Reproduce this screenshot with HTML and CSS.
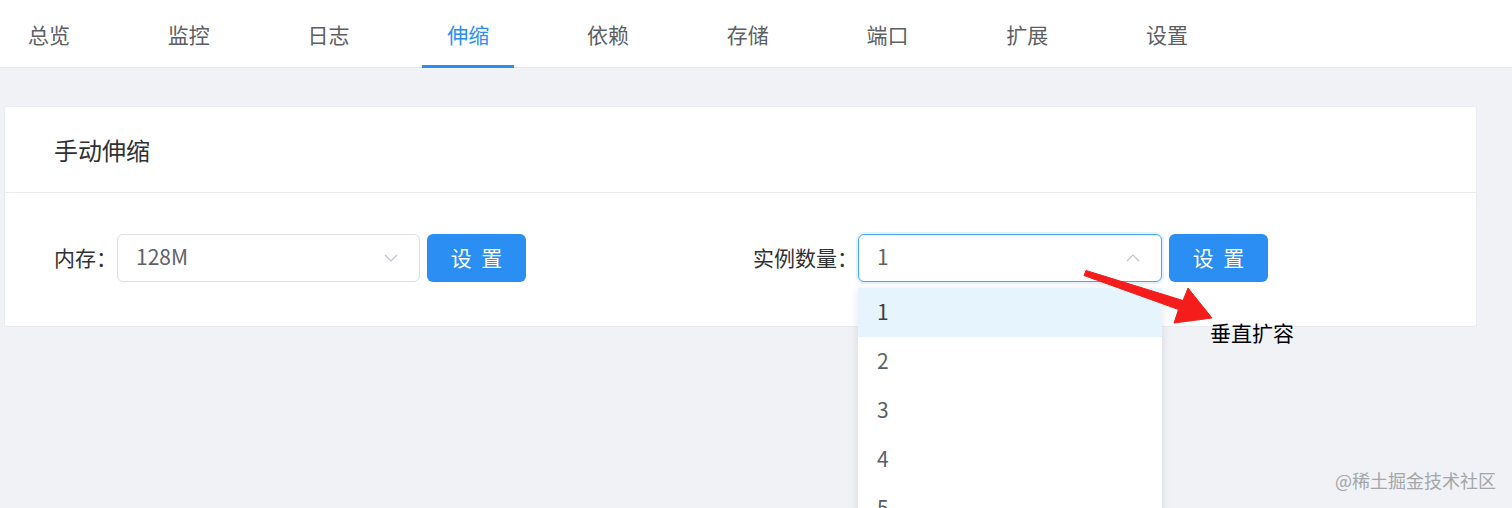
FILE: index.html
```html
<!DOCTYPE html>
<html lang="zh-CN">
<head>
<meta charset="utf-8">
<title>伸缩</title>
<link rel="stylesheet" href="styles.css">
</head>
<body>
<nav class="nav">
  <div class="tabs">
    <div class="tab">总览</div>
    <div class="tab">监控</div>
    <div class="tab">日志</div>
    <div class="tab active">伸缩</div>
    <div class="tab">依赖</div>
    <div class="tab">存储</div>
    <div class="tab">端口</div>
    <div class="tab">扩展</div>
    <div class="tab">设置</div>
  </div>
</nav>
<main class="main">
  <section class="card">
    <header class="card-header">手动伸缩</header>
    <div class="card-body">
      <div class="form-item">
        <span class="label">内存：</span>
        <div class="select">
          <span class="value">128M</span>
          <svg class="chev" width="14" height="8" viewBox="0 0 14 8"><polyline points="1,1 7,7 13,1" fill="none" stroke="#c0c4cc" stroke-width="1.2"/></svg>
        </div>
        <button class="btn">设 置</button>
      </div>
      <div class="form-item second">
        <span class="label">实例数量：</span>
        <div class="select-wrap">
          <div class="select focus">
            <span class="value">1</span>
            <svg class="chev" width="14" height="8" viewBox="0 0 14 8"><polyline points="1,7 7,1 13,7" fill="none" stroke="#c0c4cc" stroke-width="1.2"/></svg>
          </div>
          <ul class="dropdown">
            <li class="opt hover">1</li>
            <li class="opt">2</li>
            <li class="opt">3</li>
            <li class="opt">4</li>
            <li class="opt">5</li>
          </ul>
        </div>
        <button class="btn">设 置</button>
      </div>
    </div>
  </section>
</main>
<svg class="arrow" width="160" height="80" viewBox="0 0 160 80">
  <polygon points="16,10.5 113,40.5 118,28 142,58 104,63 108.5,49.5 14,15.5" fill="#f51c1c" stroke="#f51c1c" stroke-width="1" stroke-linejoin="round"/>
</svg>
<div class="note">垂直扩容</div>
<div class="watermark">@稀土掘金技术社区</div>
</body>
</html>
```

FILE: styles.css
```css
html, body {
  margin: 0;
  padding: 0;
  overflow: hidden;
}
body {
  background: #f0f2f5;
  font-family: "Noto Sans CJK SC", "Noto Sans", sans-serif;
  color: #303133;
  height: 508px;
  position: relative;
}
.nav {
  background: #fff;
  height: 67px;
  border-bottom: 1px solid #e4e7ed;
}
.tabs {
  display: flex;
  gap: 47.75px;
  padding-left: 3px;
  margin-bottom: -1px;
}
.tab {
  width: 92px;
  height: 68px;
  box-sizing: border-box;
  border-bottom: 3px solid transparent;
  display: flex;
  align-items: center;
  justify-content: center;
  padding-top: 2px;
  font-size: 21px;
  color: #5c5f64;
}
.tab.active {
  color: #2b8ef3;
  border-bottom-color: #2b8ef3;
}
.main {
  padding: 38px 35px 0 4px;
}
.card {
  background: #fff;
  border: 1px solid #e8ebf0;
  border-radius: 3px;
}
.card-header {
  height: 85px;
  border-bottom: 1px solid #e8ebf0;
  display: flex;
  align-items: center;
  padding-left: 49px;
  font-size: 24px;
  color: #303133;
}
.card-body {
  display: flex;
  align-items: center;
  padding: 40px 0 43px 49px;
}
.form-item {
  display: flex;
  align-items: center;
}
.form-item.second {
  margin-left: 227px;
}
.label {
  font-size: 21px;
  color: #303133;
  line-height: 48px;
  padding-bottom: 2px;
}
.select-wrap {
  position: relative;
}
.select {
  width: 303px;
  height: 48px;
  box-sizing: border-box;
  border: 1px solid #dcdfe6;
  border-radius: 6px;
  display: flex;
  align-items: center;
  justify-content: space-between;
  padding: 0 21px 0 18px;
  font-size: 21px;
  color: #606266;
}
.select.focus {
  width: 304px;
  border-color: #4aa3f7;
  box-shadow: 0 0 0 2px rgba(74, 163, 247, 0.15);
}
.value {
  line-height: 1;
  padding-bottom: 3px;
}
.btn {
  margin-left: 7px;
  width: 99px;
  height: 48px;
  border: none;
  border-radius: 6px;
  background: #2b8ef3;
  color: #fff;
  font-family: inherit;
  font-size: 21px;
  word-spacing: 5px;
  padding: 0 0 2px;
}
.dropdown {
  position: absolute;
  top: 54px;
  left: 0;
  width: 304px;
  margin: 0;
  padding: 0;
  list-style: none;
  background: #fff;
  box-shadow: 0 2px 10px rgba(0, 0, 0, 0.1);
  z-index: 5;
}
.opt {
  height: 49px;
  line-height: 46px;
  padding-left: 19px;
  font-size: 21px;
  color: #5a5e66;
}
.opt.hover {
  background: #e6f4fd;
  color: #3a3e44;
}
.arrow {
  position: absolute;
  left: 1070px;
  top: 260px;
  z-index: 10;
}
.note {
  position: absolute;
  left: 1210px;
  top: 317px;
  font-size: 21px;
  line-height: 30px;
  color: #000;
  z-index: 10;
}
.watermark {
  position: absolute;
  left: 1335px;
  top: 467px;
  font-size: 18px;
  line-height: 26px;
  color: #a3a6ab;
  z-index: 10;
}
```
